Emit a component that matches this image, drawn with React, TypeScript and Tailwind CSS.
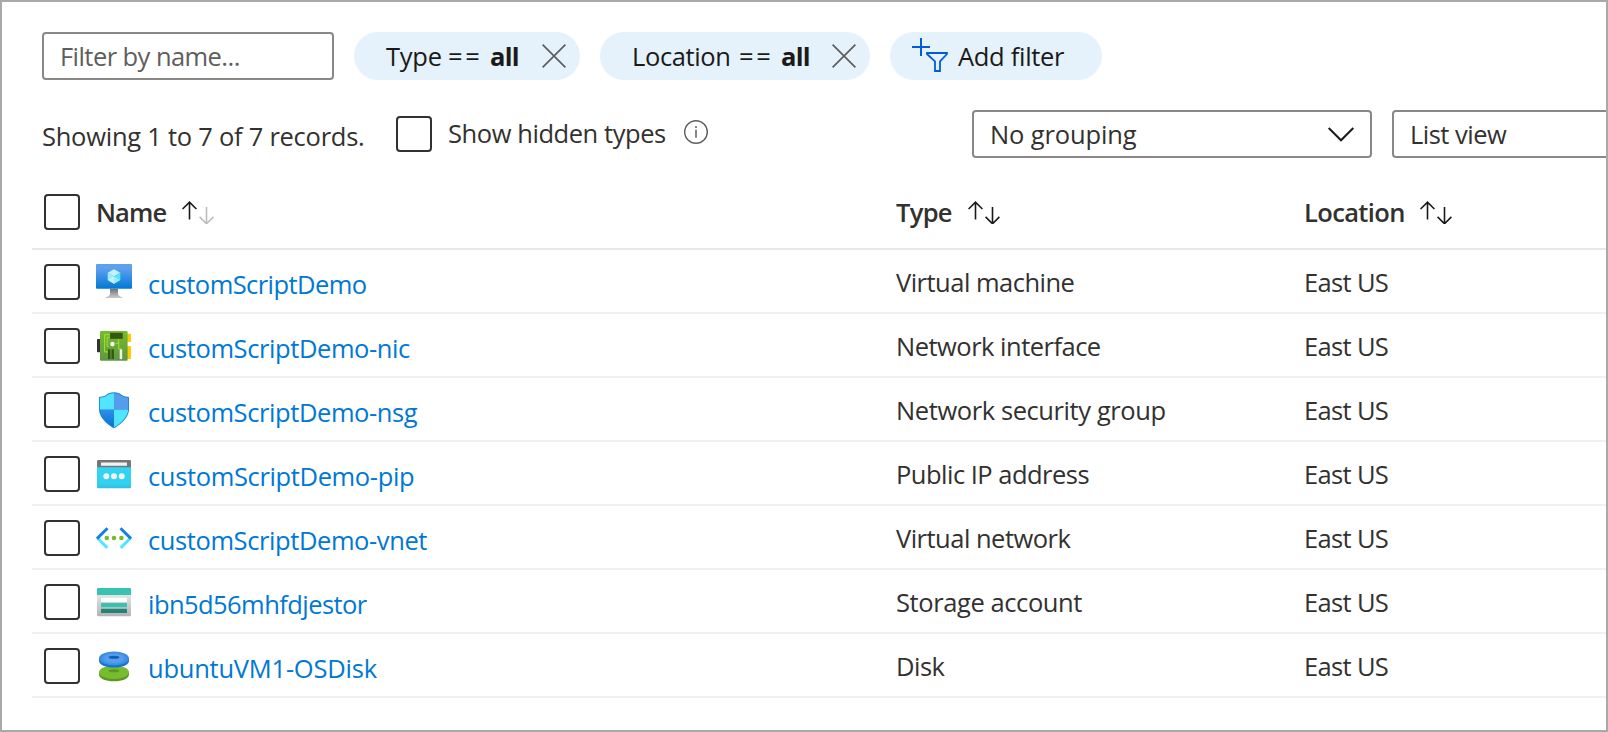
import React from "react";

type IconProps = { children: React.ReactNode };

function Glyph({ children }: IconProps) {
  return (
    <svg className="h-9 w-9 shrink-0" viewBox="0 0 36 36" fill="none">
      {children}
    </svg>
  );
}

function VmIcon() {
  return (
    <Glyph>
      <defs>
        <linearGradient id="vmScreen" x1="0" y1="1" x2="0" y2="0">
          <stop offset="0" stopColor="#0078d4" />
          <stop offset="0.82" stopColor="#5ea0ef" />
        </linearGradient>
        <linearGradient id="vmStand" x1="0" y1="1" x2="0" y2="0">
          <stop offset="0.1" stopColor="#c4c4c4" />
          <stop offset="1" stopColor="#707070" />
        </linearGradient>
      </defs>
      <rect width="36" height="24.8" rx="1" fill="url(#vmScreen)" />
      <path d="M14 24.8h8v4.8c0 2.2 1.8 3.2 4.8 3.8V34H9.2v-.6c3-.6 4.8-1.6 4.8-3.8z" fill="url(#vmStand)" />
      <path d="M18 5.2l6.3 3.6L18 12.4l-6.3-3.6z" fill="#c3f1ff" />
      <path d="M11.7 8.8L18 12.4v7.3l-6.3-3.7z" fill="#9cebff" />
      <path d="M24.3 8.8V16L18 19.7v-7.3z" fill="#50e6ff" />
      <path d="M11.7 16l6.3-3.6v7.3z" fill="#c3f1ff" />
      <path d="M24.3 16L18 12.4v7.3z" fill="#9cebff" />
    </Glyph>
  );
}

function NicIcon() {
  return (
    <Glyph>
      <defs>
        <linearGradient id="nicBoard" x1="0" y1="1" x2="0" y2="0">
          <stop offset="0" stopColor="#5e9641" />
          <stop offset="1" stopColor="#76bc2d" />
        </linearGradient>
      </defs>
      <rect x="1" y="11" width="4" height="13.2" rx="0.6" fill="#333333" />
      <rect x="30" y="5.8" width="5" height="8.2" rx="0.6" fill="#ffca00" />
      <rect x="30" y="18" width="5" height="13" rx="0.6" fill="#ffca00" />
      <rect x="4" y="3" width="27.6" height="29.8" rx="1" fill="url(#nicBoard)" />
      <path d="M14 6.700H8.600v17.200H12M14 9.300h-2.800v9.200h1.600M22.700 10.700v4.600h-3M22.700 15.300v5.600h2.500" stroke="#a4e32a" strokeWidth="1" />
      <rect x="14" y="4.8" width="12.7" height="6" fill="#365615" />
      <rect x="12" y="21.3" width="2.4" height="9.8" fill="#365615" />
      <rect x="15.5" y="21.3" width="2.4" height="9.8" fill="#365615" />
      <rect x="23.7" y="21.3" width="2.5" height="9.8" fill="#f2f2f2" />
      <circle cx="16.4" cy="16.1" r="2.3" fill="#f2f2f2" />
    </Glyph>
  );
}

const SHIELD =
  "M33 17.2c0 9.4-11.2 17-14.1 18.6a1.8 1.8 0 0 1-1.8 0C14.2 34.2 3 26.600 3 17.2V5.700a1 1 0 0 1 1-1C11.600 4.500 10 .3 18 .3s6.400 4.200 14 4.400a1 1 0 0 1 1 1z";

function NsgIcon() {
  return (
    <Glyph>
      <defs>
        <clipPath id="shieldInner">
          <path d={SHIELD} transform="translate(1 1) scale(.945)" />
        </clipPath>
        <linearGradient id="shieldDark" x1="0" y1="1" x2="0" y2="0">
          <stop offset="0" stopColor="#0072d0" />
          <stop offset="1" stopColor="#2e8fe6" />
        </linearGradient>
      </defs>
      <path d={SHIELD} fill="#1a7fd8" />
      <g clipPath="url(#shieldInner)">
        <rect width="18" height="17.700" fill="#50e6ff" />
        <rect x="18" width="18" height="17.700" fill="#559cec" />
        <rect y="17.700" width="18" height="19" fill="url(#shieldDark)" />
        <rect x="18" y="17.700" width="18" height="19" fill="#50e6ff" />
      </g>
    </Glyph>
  );
}

function PipIcon() {
  return (
    <Glyph>
      <defs>
        <linearGradient id="pipBody" x1="0" y1="1" x2="0" y2="0">
          <stop offset="0" stopColor="#32bedd" />
          <stop offset="0.2" stopColor="#32d0f0" />
          <stop offset="1" stopColor="#32d4f5" />
        </linearGradient>
      </defs>
      <path d="M1 11h34v20a1.200 1.200 0 0 1-1.200 1.200H2.200A1.200 1.200 0 0 1 1 31z" fill="url(#pipBody)" />
      <path d="M2.200 4h31.600A1.200 1.200 0 0 1 35 5.200V11.200H1V5.200A1.200 1.200 0 0 1 2.200 4z" fill="#767676" />
      <rect x="5" y="6.600" width="26" height="3.200" rx="0.500" fill="#f2f2f2" />
      <circle cx="10.300" cy="20.300" r="3" fill="#f2f2f2" />
      <circle cx="18" cy="20.300" r="3" fill="#f2f2f2" />
      <circle cx="25.700" cy="20.300" r="3" fill="#f2f2f2" />
    </Glyph>
  );
}

function VnetIcon() {
  return (
    <Glyph>
      <path d="M11.300 27.900L1.400 18M24.700 27.900l9.900-9.900" stroke="#50e6ff" strokeWidth="3" />
      <path d="M11.500 8.200L1 18.700M24.500 8.200L35 18.700" stroke="#1580df" strokeWidth="3" />
      <circle cx="10.800" cy="18" r="2.300" fill="#76bc2d" />
      <circle cx="18" cy="18" r="2.300" fill="#76bc2d" />
      <circle cx="25.400" cy="18" r="2.300" fill="#76bc2d" />
    </Glyph>
  );
}

function StorageIcon() {
  return (
    <Glyph>
      <defs>
        <linearGradient id="storageBody" x1="0" y1="1" x2="0" y2="0">
          <stop offset="0" stopColor="#b3b3b3" />
          <stop offset="1" stopColor="#e6e6e6" />
        </linearGradient>
      </defs>
      <path d="M1 10.500h34V31a1.200 1.200 0 0 1-1.200 1.200H2.200A1.200 1.200 0 0 1 1 31z" fill="url(#storageBody)" />
      <path d="M2.200 4h31.600A1.200 1.200 0 0 1 35 5.200V11H1V5.200A1.200 1.200 0 0 1 2.200 4z" fill="#37c2b1" />
      <rect x="5" y="13.700" width="26" height="4.300" rx="0.500" fill="#ffffff" />
      <rect x="5" y="19" width="26" height="4.300" rx="0.500" fill="#37c2b1" />
      <rect x="5" y="24.800" width="26" height="4.300" rx="0.500" fill="#258277" />
    </Glyph>
  );
}

function DiskIcon() {
  return (
    <Glyph>
      <defs>
        <radialGradient id="diskTop" cx="0.5" cy="0.5" r="0.5">
          <stop offset="0.1" stopColor="#5ea0ef" />
          <stop offset="0.6" stopColor="#559cec" />
          <stop offset="1" stopColor="#2f87df" />
        </radialGradient>
      </defs>
      <path d="M3 24.200v2.500c0 3.700 6.700 6.600 15 6.600s15-2.900 15-6.600v-2.500z" fill="#5e9624" />
      <ellipse cx="18" cy="24.200" rx="15" ry="6.700" fill="#76bc2d" />
      <ellipse cx="18" cy="22.800" rx="5.300" ry="1.500" fill="#5e9624" />
      <path d="M3 10.500V13c0 3.700 6.700 6.600 15 6.600S33 16.700 33 13v-2.500z" fill="#0f74d4" />
      <ellipse cx="18" cy="10.500" rx="15" ry="6.900" fill="url(#diskTop)" />
      <ellipse cx="18" cy="9.300" rx="5.300" ry="1.500" fill="#0f5fae" />
    </Glyph>
  );
}

function SortArrows({ downClass = "stroke-[#1b1a19]" }: { downClass?: string }) {
  return (
    <svg className="h-6 w-8 shrink-0" viewBox="0 0 32 24" fill="none" strokeWidth="1.6">
      <path className="stroke-[#1b1a19]" d="M7.500 19.400V2.200M.6 9L7.500 2.100l6.900 6.900" />
      <path className={downClass} d="M24.500 6.900v17M17.600 16.900l6.900 6.900 6.900-6.900" />
    </svg>
  );
}

function CloseIcon() {
  return (
    <svg className="h-6 w-6 shrink-0 stroke-[#605e5c]" viewBox="0 0 24 24" fill="none" strokeWidth="1.7">
      <path d="M.6.6l22.800 22.800M23.400.6L.6 23.400" />
    </svg>
  );
}

function AddFilterIcon() {
  return (
    <svg className="h-9 w-9 shrink-0 stroke-[#015cda]" viewBox="0 0 36 36" fill="none" strokeWidth="2">
      <path d="M0 9h18M9 0v18" />
      <path strokeWidth="1.800" d="M15 15h20v1l-7 7.300V33h-5V23.300L15 16z" />
    </svg>
  );
}

function Checkbox() {
  return <span className="h-9 w-9 shrink-0 rounded-[4px] border-2 border-[#323130] bg-white" />;
}

function Pill({ label, width, labelClass }: { label: string; width: string; labelClass: string }) {
  return (
    <div className={`flex h-12 shrink-0 items-center justify-between rounded-full bg-[#e5f1fb] pr-[14px] pl-8 text-[#1b1a19] ${width}`}>
      <span className="flex">
        <span className={labelClass}>{label}</span>
        <span className="w-[42px] tracking-[0.1em]">==</span>
        <b className="font-bold tracking-[-0.03em]">all</b>
      </span>
      <CloseIcon />
    </div>
  );
}

const rows = [
  { icon: <VmIcon />, name: "customScriptDemo", type: "Virtual machine", n: "tracking-[-0.022em]", t: "tracking-[-0.02em]" },
  { icon: <NicIcon />, name: "customScriptDemo-nic", type: "Network interface", n: "tracking-[-0.016em]", t: "tracking-[-0.02em]" },
  { icon: <NsgIcon />, name: "customScriptDemo-nsg", type: "Network security group", n: "tracking-[-0.016em]", t: "tracking-[-0.016em]" },
  { icon: <PipIcon />, name: "customScriptDemo-pip", type: "Public IP address", n: "tracking-[-0.014em]", t: "tracking-[-0.02em]" },
  { icon: <VnetIcon />, name: "customScriptDemo-vnet", type: "Virtual network", n: "tracking-[-0.016em]", t: "tracking-[-0.02em]" },
  { icon: <StorageIcon />, name: "ibn5d56mhfdjestor", type: "Storage account", n: "tracking-[-0.022em]", t: "tracking-[-0.016em]" },
  { icon: <DiskIcon />, name: "ubuntuVM1-OSDisk", type: "Disk", n: "tracking-[-0.009em]", t: "tracking-[-0.02em]" },
];

export default function App() {
  return (
    <div className="h-[732px] w-[1608px] overflow-hidden border-2 border-[#a9a9a9] bg-white pt-[30px] font-['Open_Sans','Noto_Sans',sans-serif] text-[25.5px] leading-9 tracking-[-0.02em] whitespace-nowrap text-[#323130]">
      <div className="flex h-12 gap-5 pl-10">
        <div className="flex w-[292px] shrink-0 items-center rounded-[4px] border-2 border-[#8a8886] pl-4 text-[#605e5c]">
          <span className="tracking-[-0.022em]">Filter by name...</span>
        </div>
        <Pill label="Type" width="w-[226px]" labelClass="w-[62px] tracking-[-0.01em]" />
        <Pill label="Location" width="w-[270px]" labelClass="w-[107px] tracking-[-0.015em]" />
        <div className="flex w-[212px] items-center rounded-full bg-[#e5f1fb] pl-[22px] text-[#1b1a19]">
          <AddFilterIcon />
          <span className="ml-[10px] tracking-[-0.012em]">Add filter</span>
        </div>
      </div>

      <div className="mt-[30px] flex h-12 items-center pl-10">
        <span className="w-[354px] shrink-0 pt-1 tracking-[-0.01em]">Showing 1 to 7 of 7 records.</span>
        <Checkbox />
        <span className="ml-4 w-[236px] shrink-0 pb-0.5 tracking-[-0.017em]">Show hidden types</span>
        <svg className="mb-1 h-6 w-6 shrink-0" viewBox="0 0 24 24" fill="none">
          <circle cx="12" cy="12" r="11.300" stroke="#605e5c" strokeWidth="1.400" />
          <path d="M12 9.800v8" stroke="#605e5c" strokeWidth="1.500" />
          <circle cx="12" cy="7" r="1" fill="#605e5c" />
        </svg>
        <div className="ml-[264px] flex h-12 w-[400px] shrink-0 items-center justify-between rounded-[4px] border-2 border-[#8a8886] pr-4 pl-4">
          <span className="tracking-[-0.005em]">No grouping</span>
          <svg className="h-4 w-[26px] shrink-0" viewBox="0 0 26 16" fill="none">
            <path d="M.7 2l12.300 12.300L25.300 2" stroke="#1b1a19" strokeWidth="2" />
          </svg>
        </div>
        <div className="ml-5 flex h-12 w-[400px] shrink-0 items-center rounded-[4px] border-2 border-[#8a8886] pl-4">
          <span>List view</span>
        </div>
      </div>

      <div className="ml-[30px]">
        <div className="flex h-[92px] items-center border-b-2 border-[#e8e8e8] pt-[18px] pl-3 font-semibold">
          <Checkbox />
          <div className="ml-4 flex w-[800px] items-center">
            <span className="w-[86px] tracking-[-0.035em]">Name</span>
            <SortArrows downClass="stroke-[#bdbdbd]" />
          </div>
          <div className="flex w-[408px] items-center">
            <span className="w-[72px] tracking-[-0.027em]">Type</span>
            <SortArrows />
          </div>
          <span className="w-[116px] tracking-[-0.025em]">Location</span>
          <SortArrows />
        </div>
        {rows.map((row) => (
          <div key={row.name} className="flex h-16 items-center border-b-2 border-[#f0f0f0] pt-0.5 pl-3">
            <Checkbox />
            <div className="ml-4 flex w-[800px] items-center">
              {row.icon}
              <span className={`ml-4 pt-1 text-[#0078d4] ${row.n}`}>{row.name}</span>
            </div>
            <span className={`w-[408px] ${row.t}`}>{row.type}</span>
            <span className="tracking-[-0.026em]">East US</span>
          </div>
        ))}
      </div>
    </div>
  );
}
